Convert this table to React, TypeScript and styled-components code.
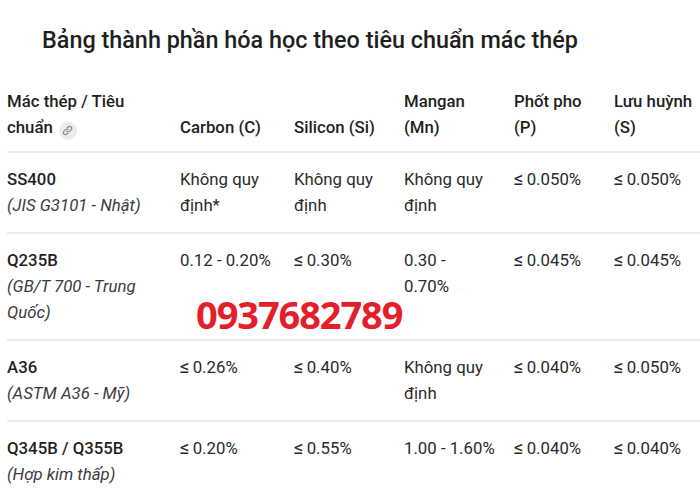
import React from "react";
import styled, { createGlobalStyle } from "styled-components";

const GlobalStyle = createGlobalStyle`
  html, body {
    margin: 0;
    padding: 0;
    background: #fff;
    overflow: hidden;
  }
  body {
    font-family: Roboto, "Noto Sans", sans-serif;
    color: #1f1f1f;
  }
`;

const Page = styled.div`
  position: relative;
  width: 700px;
  height: 500px;
  overflow: hidden;
`;

const Title = styled.h1`
  margin: 0;
  padding: 26px 0 0 42px;
  font-size: 23.4px;
  font-weight: 500;
  line-height: 28px;
  color: #1f1f1f;
`;

const Table = styled.div`
  margin: 34px 0 0 7px;
  display: grid;
  grid-template-columns: 173px 114px 110px 110px 100px 1fr;
`;

const Row = styled.div<{ $head?: boolean }>`
  display: contents;

  & > div {
    border-bottom: 2px solid #ececec;
    padding: ${(p) => (p.$head ? "0 0 11px" : "13px 0 14px")};
    align-self: stretch;
    display: flex;
    flex-direction: column;
    justify-content: ${(p) => (p.$head ? "flex-end" : "flex-start")};
  }
`;

const Cell = styled.div`
  font-size: 16.8px;
  line-height: 26px;
  color: #2a2a2a;
  white-space: pre-line;
`;

const HeadCell = styled(Cell)`
  font-weight: 500;
  color: #1f1f1f;
`;

const Grade = styled.span`
  font-weight: 500;
  color: #1f1f1f;
`;

const Standard = styled.span`
  font-style: italic;
  color: #3c3c3c;
`;

const Leq = styled.span`
  font-size: 19px;
  margin-right: 3px;
`;

const LinkBadge = styled.span`
  display: inline-flex;
  align-items: center;
  justify-content: center;
  width: 18px;
  height: 18px;
  border-radius: 50%;
  background: #ebebf0;
  margin-left: 6px;
  vertical-align: -3px;
`;

const Phone = styled.div`
  position: absolute;
  left: 196px;
  top: 292px;
  font-family: "Open Sans", sans-serif;
  font-weight: 700;
  font-size: 38px;
  line-height: 44px;
  letter-spacing: -1.1px;
  color: #e41e2b;
`;

const LinkIcon = () => (
  <svg width="11" height="11" viewBox="0 0 24 24" fill="none" stroke="#8a8a94" strokeWidth="2.6" strokeLinecap="round">
    <path d="M10 14a4.5 4.5 0 0 0 6.4 0l3.2-3.2a4.5 4.5 0 0 0-6.4-6.4L11.6 6" />
    <path d="M14 10a4.5 4.5 0 0 0-6.4 0l-3.2 3.2a4.5 4.5 0 0 0 6.4 6.4l1.6-1.6" />
  </svg>
);

type DataRow = {
  grade: string;
  standard: string;
  values: string[];
  tall?: boolean;
};

const rows: DataRow[] = [
  {
    grade: "SS400",
    standard: "(JIS G3101 - Nhật)",
    values: ["Không quy\nđịnh*", "Không quy\nđịnh", "Không quy\nđịnh", "≤0.050%", "≤0.050%"],
  },
  {
    grade: "Q235B",
    standard: "(GB/T 700 - Trung\nQuốc)",
    values: ["0.12 - 0.20%", "≤0.30%", "0.30 -\n0.70%", "≤0.045%", "≤0.045%"],
  },
  {
    grade: "A36",
    standard: "(ASTM A36 - Mỹ)",
    values: ["≤0.26%", "≤0.40%", "Không quy\nđịnh", "≤0.040%", "≤0.050%"],
  },
  {
    grade: "Q345B / Q355B",
    standard: "(Hợp kim thấp)",
    values: ["≤0.20%", "≤0.55%", "1.00 - 1.60%", "≤0.040%", "≤0.040%"],
  },
];

const renderValue = (v: string) =>
  v.startsWith("≤") ? (
    <span>
      <Leq>≤</Leq>
      {v.slice(1)}
    </span>
  ) : (
    v
  );

export default function App() {
  return (
    <Page>
      <GlobalStyle />
      <Title>Bảng thành phần hóa học theo tiêu chuẩn mác thép</Title>
      <Table>
        <Row $head>
          <HeadCell>
            <span>Mác thép / Tiêu</span>
            <span>
              chuẩn
              <LinkBadge>
                <LinkIcon />
              </LinkBadge>
            </span>
          </HeadCell>
          <HeadCell>Carbon (C)</HeadCell>
          <HeadCell>Silicon (Si)</HeadCell>
          <HeadCell>{"Mangan\n(Mn)"}</HeadCell>
          <HeadCell>{"Phốt pho\n(P)"}</HeadCell>
          <HeadCell>{"Lưu huỳnh\n(S)"}</HeadCell>
        </Row>
        {rows.map((r) => (
          <Row key={r.grade}>
            <Cell>
              <Grade>{r.grade}</Grade>
              <Standard>{r.standard}</Standard>
            </Cell>
            {r.values.map((v, i) => (
              <Cell key={i}>{renderValue(v)}</Cell>
            ))}
          </Row>
        ))}
      </Table>
      <Phone>0937682789</Phone>
    </Page>
  );
}
